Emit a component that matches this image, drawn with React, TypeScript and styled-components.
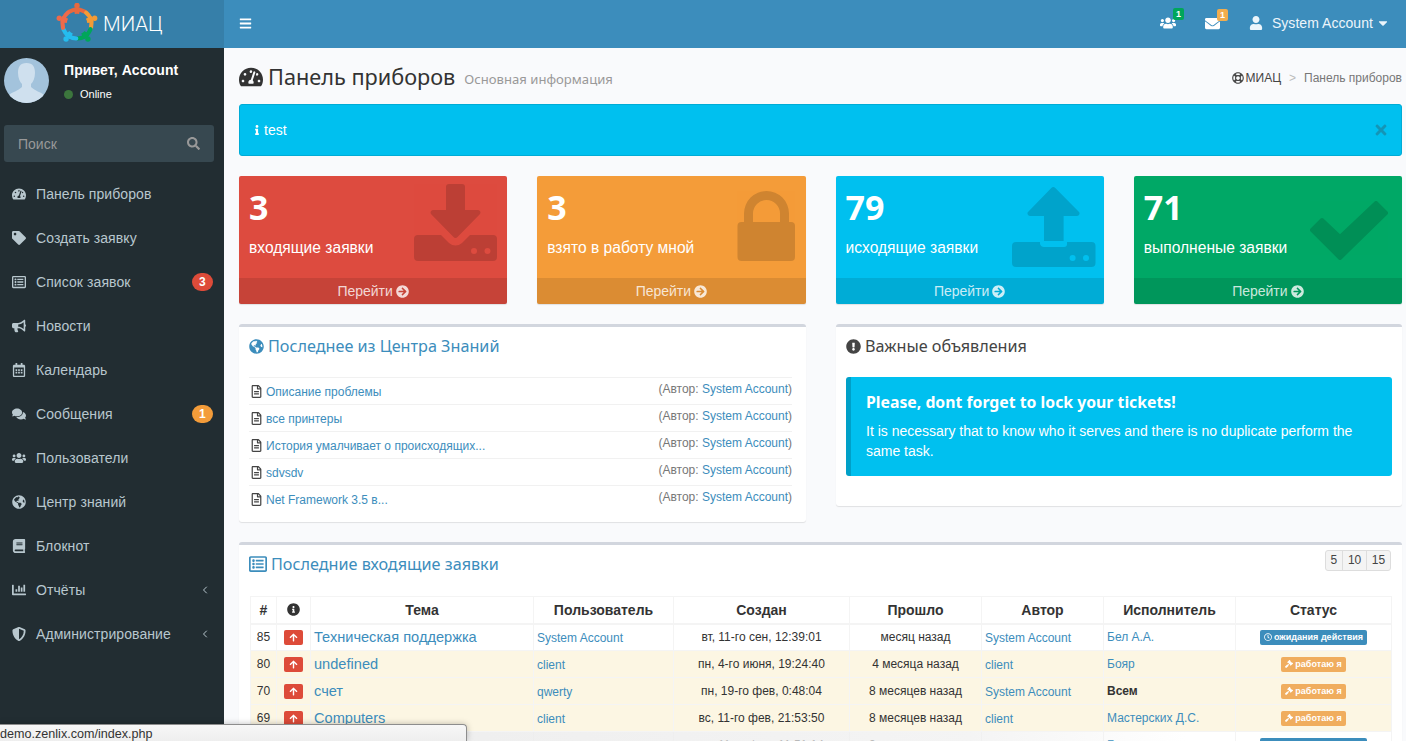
import React from "react";
import styled, { createGlobalStyle } from "styled-components";
import {
  FaTachometerAlt, FaTag, FaRegListAlt, FaBullhorn, FaRegCalendarAlt, FaComments, FaUsers, FaGlobeAmericas,
  FaBook, FaChartBar, FaShieldAlt, FaSearch, FaBars, FaEnvelope, FaUser, FaInfo, FaTimes,
  FaArrowCircleRight, FaRegFileAlt, FaInfoCircle, FaExclamationCircle, FaArrowUp, FaGavel, FaRegClock, FaCaretDown, FaRegLifeRing,
} from "react-icons/fa";
import { FiChevronLeft } from "react-icons/fi";

const GlobalStyle = createGlobalStyle`
  html, body { margin: 0; padding: 0; height: 100%; overflow: hidden; }
  body { font-family: "Liberation Sans", Arial, sans-serif; background: #f9fafc; color: #333; }
  * { box-sizing: border-box; }
`;
const HEAD = `"Noto Sans", "Open Sans", sans-serif`;

const Page = styled.div`display: flex; width: 1406px; height: 741px; overflow: hidden; position: relative;`;
const Sidebar = styled.aside`width: 224px; flex: none; background: #222d32; display: flex; flex-direction: column;`;
const LogoBar = styled.div`height: 48px; background: #367fa9; display: flex; align-items: center; padding-left: 56px; gap: 5px;`;
const LogoText = styled.span`font-family: Roboto, sans-serif; font-weight: 300; font-size: 20.4px; color: #fff;`;
const UserPanel = styled.div`display: flex; padding: 10px 4px 0; height: 77px;`;
const Avatar = styled.div`width: 45px; height: 45px; border-radius: 50%; overflow: hidden; flex: none;`;
const UserInfo = styled.div`margin-left: 15px; padding-top: 4px;`;
const UserName = styled.div`color: #fff; font-weight: 700; font-size: 14px; line-height: 17px; letter-spacing: 0.1px;`;
const OnlineRow = styled.div`display: flex; align-items: center; gap: 7px; margin-top: 8px; color: #fff; font-size: 11px; line-height: 14px;`;
const Dot = styled.i`width: 9px; height: 9px; border-radius: 50%; background: #3c763d; display: block;`;
const SearchBox = styled.div`margin: 0 10px 0 4px; height: 37px; background: #374850; border-radius: 3px; display: flex; align-items: center; justify-content: space-between; padding: 0 14px; color: #999; font-size: 14px;`;
const Menu = styled.nav`margin-top: 10px; display: flex; flex-direction: column;`;
const MenuItem = styled.div`height: 44px; display: flex; align-items: center; padding: 0 11px 0 12px; color: #b8c7ce; font-size: 14px; letter-spacing: 0.08px;`;
const MenuIcon = styled.span`width: 24px; flex: none; display: flex; align-items: center; font-size: 14px; svg { display: block; }`;
const MenuLabel = styled.span`flex: 1; white-space: nowrap;`;
const Pill = styled.span<{ $bg: string }>`width: 21px; height: 18px; border-radius: 9px; background: ${p => p.$bg}; color: #fff; font-size: 12px; font-weight: 700; display: flex; align-items: center; justify-content: center;`;
const Chevron = styled.span`display: flex; margin-right: 2px; font-size: 12px;`;

const Main = styled.main`flex: 1; min-width: 0; display: flex; flex-direction: column;`;
const TopBar = styled.header`height: 48px; flex: none; background: #3c8dbc; display: flex; align-items: center; color: #fff; padding: 0 16px 2px 15px;`;
const Burger = styled.span`display: flex; font-size: 13px;`;
const TopRight = styled.div`margin-left: auto; display: flex; align-items: center;`;
const NavIcon = styled.span<{ $mr: number }>`position: relative; display: flex; font-size: 15px; margin-right: ${p => p.$mr}px;`;
const NavBadge = styled.span<{ $bg: string }>`position: absolute; top: -7px; right: -8px; width: 11px; height: 12px; border-radius: 2px; background: ${p => p.$bg}; color: #fff; font-size: 9px; font-weight: 700; line-height: 12px; text-align: center;`;
const UserLink = styled.span`display: flex; align-items: center; font-size: 14px; color: #ecf5fb; letter-spacing: 0.05px; > svg:first-child { margin-right: 9px; } > svg:last-child { margin-left: 3px; }`;

const Content = styled.div`padding: 0 4px 0 15px; display: flex; flex-direction: column;`;
const TitleRow = styled.div`height: 56px; display: flex; align-items: center; justify-content: space-between; padding-top: 1px;`;
const Title = styled.h1`margin: 0; display: flex; align-items: baseline; font: 400 21.7px ${HEAD}; color: #333; svg { align-self: center; margin-right: 5px; }`;
const Sub = styled.small`font: 400 13.1px ${HEAD}; color: #999; margin-left: 9px; transform: translateY(-1.5px);`;
const Crumbs = styled.div`display: flex; align-items: center; margin-top: 2px; font-size: 12px; color: #444; svg { margin-right: 2px; }`;
const CrumbSep = styled.span`color: #bbb; margin: 0 8px;`;
const CrumbNow = styled.span`color: #777;`;
const Alert = styled.div`height: 52px; background: #00c0ef; border: 1px solid #00acd6; border-radius: 3px; color: #fff; display: flex; align-items: center; padding: 0 12px 0 12px; font-size: 14px; gap: 2px;`;
const AlertClose = styled.span`margin-left: auto; color: #1495b6; display: flex; font-size: 16px;`;

const Boxes = styled.div`display: grid; grid-template-columns: repeat(4, 1fr); gap: 30px; margin-top: 20px;`;
const SmallBox = styled.div<{ $bg: string }>`position: relative; height: 128px; background: ${p => p.$bg}; border-radius: 2px; color: #fff; overflow: hidden; display: flex; flex-direction: column; box-shadow: 0 1px 1px rgba(0,0,0,.1);`;
const BoxBody = styled.div`flex: 1; padding: 9px 10px 0;`;
const BoxNum = styled.div`font: 700 34px/44px ${HEAD};`;
const BoxLabel = styled.div`font-size: 15.6px; line-height: 20px; margin-top: 9px;`;
const BoxArt = styled.svg`position: absolute; top: 0; right: 0; width: 110px; height: 102px;`;
const BoxFoot = styled.div`height: 26px; background: rgba(0,0,0,.1); color: rgba(255,255,255,.8); font-size: 14px; display: flex; align-items: center; justify-content: center; gap: 3px;`;

const Row2 = styled.div`display: grid; grid-template-columns: 567px 566px; gap: 30px; margin-top: 20px; align-items: start;`;
const Card = styled.section`background: #fff; border-top: 3px solid #d2d6de; border-radius: 3px; box-shadow: 0 1px 1px rgba(0,0,0,.1); position: relative;`;
const CardTitle = styled.h3<{ $color: string }>`margin: 0; font: 400 16.2px/22px ${HEAD}; color: ${p => p.$color}; display: flex; align-items: center; gap: 4px;`;
const KBody = styled.div`padding: 8px 14px 10px 10px;`;
const KList = styled.div`margin-top: 20px;`;
const KRow = styled.div`height: 27px; border-top: 1px solid #f1f1f1; display: flex; justify-content: space-between; font-size: 12px;`;
const KLeft = styled.span`display: flex; align-items: center; gap: 3px; padding: 1px 0 0 1px; color: #3c8dbc; svg { color: #444; }`;
const KRight = styled.span`color: #777; padding-top: 4px;`;
const A = styled.span`color: #3c8dbc;`;
const IBody = styled.div`padding: 8px 10px 30px;`;
const Callout = styled.div`margin-top: 20px; background: #00c0ef; border-left: 5px solid #00a0c8; border-radius: 3px; color: #fff; padding: 13px 15px 13px; height: 99px;`;
const CalloutTitle = styled.h4`margin: 0; font: 700 15.8px/24px ${HEAD};`;
const CalloutText = styled.p`margin: 7px 0 0; font-size: 14px; line-height: 20px;`;

const TableCard = styled(Card)`margin-top: 20px; padding: 8px 11px 0 10px; height: 260px;`;
const PageBtns = styled.div`position: absolute; top: 5px; right: 11px; display: flex; border: 1px solid #ddd; border-radius: 3px; background: #f4f4f4;`;
const PageBtn = styled.span`height: 19px; line-height: 19px; padding: 0 4.8px; font-size: 12px; color: #444; & + & { border-left: 1px solid #ddd; }`;
const Table = styled.table`margin: 21px 0 0 1px; width: 1141px; table-layout: fixed; border-collapse: collapse; font-size: 12px;`;
const Th = styled.th`height: 27px; padding: 0; border: 1px solid #f4f4f4; border-bottom: 2px solid #f4f4f4; font-size: 14px; font-weight: 700; color: #333; text-align: center; svg { display: block; margin: 0 auto; }`;
const Tr = styled.tr<{ $warm?: boolean }>`height: 27px; background: ${p => (p.$warm ? "#fcf6e3" : "#fff")};`;
const Td = styled.td<{ $align?: string; $big?: boolean; $low?: boolean }>`padding: ${p => (p.$low ? "2px" : "0")} 3px 0; border: 1px solid #f4f4f4; text-align: ${p => p.$align || "left"}; white-space: nowrap; overflow: hidden; font-size: ${p => (p.$big ? "14.6px" : "12px")}; color: ${p => (p.$big ? "#3c8dbc" : "#333")};`;
const BoldName = styled.b`color: #333;`;
const Prio = styled.span`display: inline-flex; align-items: center; justify-content: center; width: 19px; height: 15px; background: #dd4b39; border-radius: 2px; color: #fff; font-size: 9px; vertical-align: middle;`;
const Status = styled.span<{ $bg: string }>`display: inline-flex; align-items: center; gap: 2px; height: 15px; padding: 0 4px; background: ${p => p.$bg}; border-radius: 2px; color: #fff; font-size: 9px; font-weight: 700; vertical-align: middle; letter-spacing: 0.03px;`;

const UrlBar = styled.div`position: absolute; left: 0; bottom: 0; width: 467px; height: 17px; background: linear-gradient(#f7f7f7, #eee); border: 1px solid #8d8d8d; border-left: 0; border-bottom: 0; border-top-right-radius: 4px; font-size: 12.6px; line-height: 19px; color: #333; z-index: 3; box-shadow: 0 0 6px rgba(0,0,0,.25);`;
const UrlFade = styled.div`position: absolute; left: 466px; bottom: 0; width: 720px; height: 9px; background: linear-gradient(90deg, rgba(236,236,236,.85), rgba(238,238,238,.65) 70%, rgba(255,255,255,0)); z-index: 2;`;

const polar = (a: number, r: number) => {
  const t = (a * Math.PI) / 180;
  return `${(21 + r * Math.cos(t)).toFixed(2)} ${(21 + r * Math.sin(t)).toFixed(2)}`;
};
const people = [
  { a: -90, c: "#e8693f" },
  { a: -18, c: "#f49b35" },
  { a: 54, c: "#00a65a" },
  { a: 126, c: "#25bcee" },
  { a: 198, c: "#ee6a4a" },
];
function Logo() {
  return (
    <svg width="42" height="42" viewBox="0 0 42 42" fill="none">
      {people.map(({ a, c }) => (
        <g key={a} stroke={c}>
          <path d={`M${polar(a - 33, 14.5)} A14.5 14.5 0 0 1 ${polar(a + 33, 14.5)}`} strokeWidth="4.2" strokeLinecap="round" />
          <path d={`M${polar(a - 12, 13.5)} A13.5 13.5 0 0 1 ${polar(a + 12, 13.5)}`} strokeWidth="6.4" />
          <circle cx={polar(a, 18.6).split(" ")[0]} cy={polar(a, 18.6).split(" ")[1]} r="2.7" fill={c} stroke="none" />
        </g>
      ))}
    </svg>
  );
}

function AvatarArt() {
  return (
    <svg width="45" height="45" viewBox="0 0 45 45">
      <rect width="45" height="45" fill="#a3c3dc" />
      <path d="M22.5 5 C16 5 14 9 14 15 C14 20 16 24 18 26 L18 29 C14 33 8 34 5 37 L5 45 L40 45 L40 37 C37 34 31 33 27 29 L27 26 C29 24 31 20 31 15 C31 9 29 5 22.5 5 Z" fill="#cfe0ee" />
    </svg>
  );
}

function ArtDown() {
  return (
    <BoxArt viewBox="0 0 110 102">
      <g fill="#000" opacity=".15">
        <path d="M49 11a3 3 0 0 1 3-3h13a3 3 0 0 1 3 3v23h13a2.5 2.5 0 0 1 1.8 4.2L60.5 61a2.5 2.5 0 0 1-4 0L34.2 38.2A2.5 2.5 0 0 1 36 34h13Z" />
        <path d="M21 59H44L52 67Q58.5 72 65 67L73 59H96a4 4 0 0 1 4 4V81a4 4 0 0 1-4 4H21a4 4 0 0 1-4-4V63a4 4 0 0 1 4-4Z" />
      </g>
      <circle cx="77" cy="75" r="3" fill="#dd4b3f" /><circle cx="90.5" cy="75" r="3" fill="#dd4b3f" />
    </BoxArt>
  );
}
function ArtLock() {
  return (
    <BoxArt viewBox="0 0 110 102">
      <g fill="#000" opacity=".15">
        <path d="M48 48V37.5a22.5 22.5 0 0 1 45 0V48H84V37.5a13.5 13.5 0 0 0-27 0V48Z" />
        <rect x="41.5" y="46" width="57.5" height="39" rx="4" />
      </g>
    </BoxArt>
  );
}
function ArtUp() {
  return (
    <BoxArt viewBox="0 0 110 102">
      <g fill="#000" opacity=".15">
        <path d="M57.3 12a3 3 0 0 1 4 0L84.5 35.5A2.5 2.5 0 0 1 83 40H69.6V65H50V40H36a2.5 2.5 0 0 1-1.5-4.5Z" />
        <path d="M22 66H46V68Q47 71 50 71H70Q73 71 73 68V66H97.5a4 4 0 0 1 4 4V87a4 4 0 0 1-4 4H22a4 4 0 0 1-4-4V70a4 4 0 0 1 4-4Z" />
      </g>
      <circle cx="78.6" cy="82" r="3" fill="#00c0ef" /><circle cx="92" cy="82" r="3" fill="#00c0ef" />
    </BoxArt>
  );
}
function ArtCheck() {
  return (
    <BoxArt viewBox="0 0 110 102">
      <polygon points="84,27 94,37 48,82 20,54 30,44 48,61" fill="#000" stroke="#000" strokeWidth="4" strokeLinejoin="round" opacity=".15" />
    </BoxArt>
  );
}

const menu = [
  { t: "Панель приборов", i: <FaTachometerAlt /> },
  { t: "Создать заявку", i: <FaTag /> },
  { t: "Список заявок", i: <FaRegListAlt />, b: ["3", "#dd4b39"] },
  { t: "Новости", i: <FaBullhorn /> },
  { t: "Календарь", i: <FaRegCalendarAlt /> },
  { t: "Сообщения", i: <FaComments />, b: ["1", "#f39c3a"] },
  { t: "Пользователи", i: <FaUsers /> },
  { t: "Центр знаний", i: <FaGlobeAmericas /> },
  { t: "Блокнот", i: <FaBook /> },
  { t: "Отчёты", i: <FaChartBar />, c: true },
  { t: "Администрирование", i: <FaShieldAlt />, c: true },
];

const kb = ["Описание проблемы", "все принтеры", "История умалчивает о происходящих...", "sdvsdv", "Net Framework 3.5 в..."];
const cols = [26, 34, 223, 140, 176, 132, 122, 132, 156];
const heads = ["#", "", "Тема", "Пользователь", "Создан", "Прошло", "Автор", "Исполнитель", "Статус"];
const rows = [
  { n: "85", t: "Техническая поддержка", u: "System Account", c: "вт, 11-го сен, 12:39:01", p: "месяц назад", a: "System Account", e: "Бел А.А.", w: false, s: "wait" },
  { n: "80", t: "undefined", u: "client", c: "пн, 4-го июня, 19:24:40", p: "4 месяца назад", a: "client", e: "Бояр", w: true, s: "work" },
  { n: "70", t: "счет", u: "qwerty", c: "пн, 19-го фев, 0:48:04", p: "8 месяцев назад", a: "System Account", e: "Всем", b: true, w: true, s: "work" },
  { n: "69", t: "Computers", u: "client", c: "вс, 11-го фев, 21:53:50", p: "8 месяцев назад", a: "client", e: "Мастерских Д.С.", w: true, s: "work" },
  { n: "68", t: "Принтер", u: "client", c: "вс, 11-го фев, 11:51:14", p: "8 месяцев назад", a: "client", e: "Бояр", w: false, s: "wait" },
];

export default function App() {
  return (
    <Page>
      <GlobalStyle />
      <Sidebar>
        <LogoBar><Logo /><LogoText>МИАЦ</LogoText></LogoBar>
        <UserPanel>
          <Avatar><AvatarArt /></Avatar>
          <UserInfo>
            <UserName>Привет, Account</UserName>
            <OnlineRow><Dot />Online</OnlineRow>
          </UserInfo>
        </UserPanel>
        <SearchBox>Поиск<FaSearch size={13} /></SearchBox>
        <Menu>
          {menu.map(m => (
            <MenuItem key={m.t}>
              <MenuIcon>{m.i}</MenuIcon>
              <MenuLabel>{m.t}</MenuLabel>
              {m.b && <Pill $bg={m.b[1]}>{m.b[0]}</Pill>}
              {m.c && <Chevron><FiChevronLeft /></Chevron>}
            </MenuItem>
          ))}
        </Menu>
      </Sidebar>
      <Main>
        <TopBar>
          <Burger><FaBars /></Burger>
          <TopRight>
            <NavIcon $mr={29}><FaUsers size={16} /><NavBadge $bg="#00a65a">1</NavBadge></NavIcon>
            <NavIcon $mr={29}><FaEnvelope size={15} /><NavBadge $bg="#f0ad4e">1</NavBadge></NavIcon>
            <UserLink><FaUser size={14} />System Account<FaCaretDown size={14} /></UserLink>
          </TopRight>
        </TopBar>
        <Content>
          <TitleRow>
            <Title><FaTachometerAlt size={24} />Панель приборов<Sub>Основная информация</Sub></Title>
            <Crumbs><FaRegLifeRing size={12} />МИАЦ<CrumbSep>&gt;</CrumbSep><CrumbNow>Панель приборов</CrumbNow></Crumbs>
          </TitleRow>
          <Alert><FaInfo size={10} />test<AlertClose><FaTimes /></AlertClose></Alert>
          <Boxes>
            <SmallBox $bg="#dd4b3f">
              <BoxBody><BoxNum>3</BoxNum><BoxLabel>входящие заявки</BoxLabel></BoxBody>
              <ArtDown />
              <BoxFoot>Перейти <FaArrowCircleRight size={13} /></BoxFoot>
            </SmallBox>
            <SmallBox $bg="#f49c39">
              <BoxBody><BoxNum>3</BoxNum><BoxLabel>взято в работу мной</BoxLabel></BoxBody>
              <ArtLock />
              <BoxFoot>Перейти <FaArrowCircleRight size={13} /></BoxFoot>
            </SmallBox>
            <SmallBox $bg="#00c0ef">
              <BoxBody><BoxNum>79</BoxNum><BoxLabel>исходящие заявки</BoxLabel></BoxBody>
              <ArtUp />
              <BoxFoot>Перейти <FaArrowCircleRight size={13} /></BoxFoot>
            </SmallBox>
            <SmallBox $bg="#00a866">
              <BoxBody><BoxNum>71</BoxNum><BoxLabel>выполненые заявки</BoxLabel></BoxBody>
              <ArtCheck />
              <BoxFoot>Перейти <FaArrowCircleRight size={13} /></BoxFoot>
            </SmallBox>
          </Boxes>
          <Row2>
            <Card>
              <KBody>
                <CardTitle $color="#3c8dbc"><FaGlobeAmericas size={15} />Последнее из Центра Знаний</CardTitle>
                <KList>
                  {kb.map(k => (
                    <KRow key={k}>
                      <KLeft><FaRegFileAlt size={13} />{k}</KLeft>
                      <KRight>(Автор: <A>System Account</A>)</KRight>
                    </KRow>
                  ))}
                </KList>
              </KBody>
            </Card>
            <Card>
              <IBody>
                <CardTitle $color="#444"><FaExclamationCircle size={15} />Важные объявления</CardTitle>
                <Callout>
                  <CalloutTitle>Please, dont forget to lock your tickets!</CalloutTitle>
                  <CalloutText>It is necessary that to know who it serves and there is no duplicate perform the same task.</CalloutText>
                </Callout>
              </IBody>
            </Card>
          </Row2>
          <TableCard>
            <CardTitle $color="#3c8dbc"><FaRegListAlt size={18} />Последние входящие заявки</CardTitle>
            <PageBtns><PageBtn>5</PageBtn><PageBtn>10</PageBtn><PageBtn>15</PageBtn></PageBtns>
            <Table>
              <colgroup>{cols.map((w, i) => <col key={i} style={{ width: w }} />)}</colgroup>
              <thead>
                <tr>{heads.map((h, i) => <Th key={i}>{i === 1 ? <FaInfoCircle size={13} /> : h}</Th>)}</tr>
              </thead>
              <tbody>
                {rows.map(r => (
                  <Tr key={r.n} $warm={r.w}>
                    <Td $align="center">{r.n}</Td>
                    <Td $align="center"><Prio><FaArrowUp /></Prio></Td>
                    <Td $big>{r.t}</Td>
                    <Td $low><A>{r.u}</A></Td>
                    <Td $align="center">{r.c}</Td>
                    <Td $align="center">{r.p}</Td>
                    <Td $low><A>{r.a}</A></Td>
                    <Td>{r.b ? <BoldName>{r.e}</BoldName> : <A>{r.e}</A>}</Td>
                    <Td $align="center">
                      {r.s === "wait"
                        ? <Status $bg="#3c8dbc"><FaRegClock size={8} />ожидания действия</Status>
                        : <Status $bg="#f0ad5e"><FaGavel size={8} />работаю я</Status>}
                    </Td>
                  </Tr>
                ))}
              </tbody>
            </Table>
          </TableCard>
        </Content>
      </Main>
      <UrlFade />
      <UrlBar>demo.zenlix.com/index.php</UrlBar>
    </Page>
  );
}
